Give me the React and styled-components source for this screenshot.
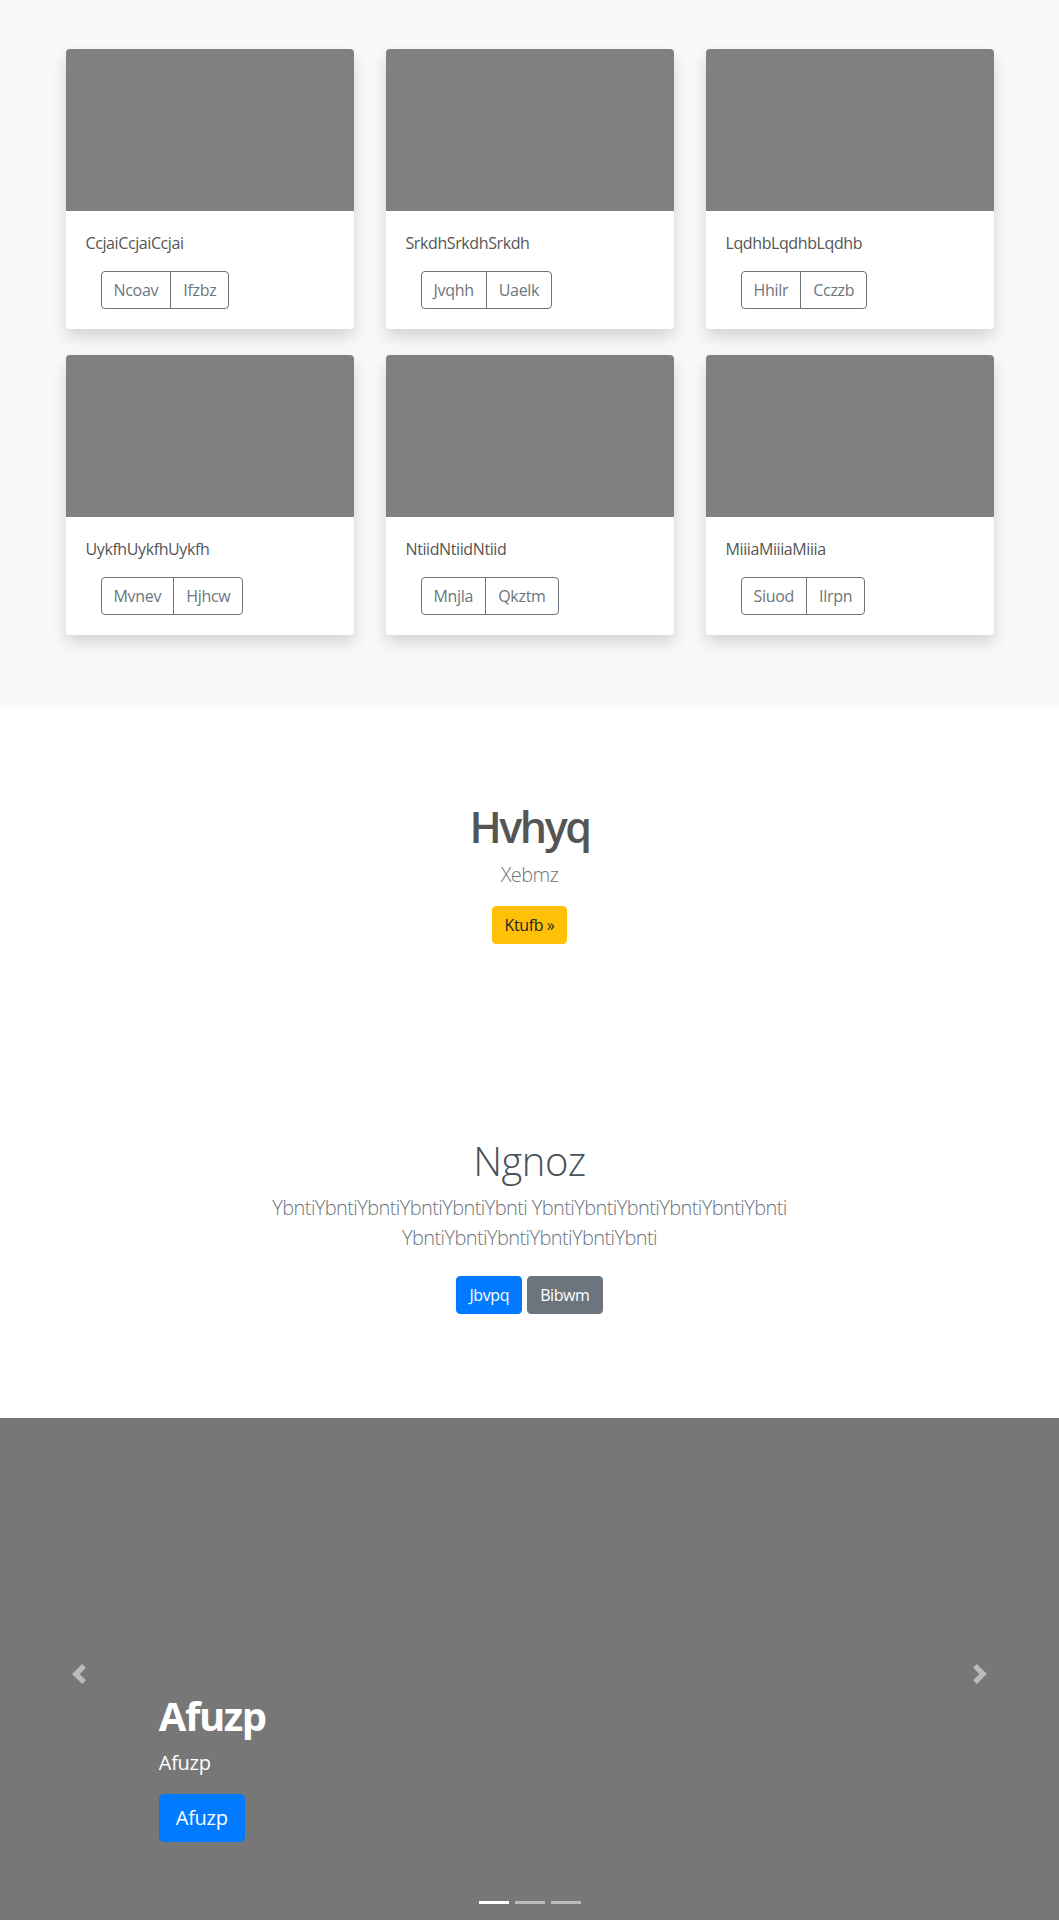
import React from "react";
import styled, { createGlobalStyle } from "styled-components";

const GlobalStyle = createGlobalStyle`
  html, body { margin: 0; padding: 0; background: #fff; }
  body {
    font-family: "Open Sans", "Noto Sans", sans-serif;
    font-size: 16px;
    line-height: 1.5;
    color: #212529;
  }
  * { box-sizing: border-box; }
`;

const CardsSection = styled.section`
  background: #f8f9fa;
  padding: 49px 0 73px;
`;

const CardGrid = styled.div`
  display: grid;
  grid-template-columns: repeat(3, 288px);
  column-gap: 32px;
  row-gap: 26px;
  justify-content: center;
`;

const Card = styled.div`
  background: #fff;
  border-radius: 4px;
  overflow: hidden;
  box-shadow: 0 8px 16px rgba(0, 0, 0, 0.15);
  height: 280px;
  display: flex;
  flex-direction: column;
`;

const CardImage = styled.div`
  height: 162px;
  background: #808080;
`;

const CardBody = styled.div`
  padding: 20px;
`;

const CardTitle = styled.p`
  margin: 0 0 16px;
  font-size: 16px;
  line-height: 24px;
  color: #555;
  letter-spacing: -0.4px;
`;

const ButtonGroup = styled.div`
  display: inline-flex;
  margin-left: 15px;
`;

const OutlineButton = styled.button`
  font-family: inherit;
  font-size: 16px;
  line-height: 24px;
  padding: 6px 12px;
  background: transparent;
  color: #6c757d;
  border: 1px solid #6c757d;
  letter-spacing: -0.3px;
  border-radius: 0;
  &:first-child { border-radius: 4px 0 0 4px; }
  &:last-child { border-radius: 0 4px 4px 0; margin-left: -1px; }
`;

const Hero = styled.section`
  background: #fff;
  padding: ${(p) => p.$pad};
  text-align: center;
`;

const HeroTitle = styled.h1`
  margin: 0 0 ${(p) => p.$mb}px;
  font-size: ${(p) => p.$size}px;
  line-height: 1.2;
  font-weight: ${(p) => p.$weight};
  color: ${(p) => p.$color};
  letter-spacing: ${(p) => p.$ls || "0"};
`;

const Lead = styled.p`
  margin: 0 auto ${(p) => p.$mb}px;
  font-size: 20px;
  line-height: 30px;
  font-weight: 300;
  color: #6c757d;
  max-width: 560px;
  letter-spacing: -0.6px;
`;

const ButtonRow = styled.div`
  display: flex;
  justify-content: center;
  gap: 5px;
`;

const SolidButton = styled.button`
  font-family: inherit;
  font-size: 16px;
  line-height: 24px;
  padding: 6px 12px;
  border: 1px solid ${(p) => p.$bg};
  background: ${(p) => p.$bg};
  color: ${(p) => p.$fg};
  border-radius: 4px;
  letter-spacing: -0.4px;
`;

const Carousel = styled.section`
  position: relative;
  height: 512px;
  background: #777;
  overflow: hidden;
  display: flex;
  flex-direction: column;
  justify-content: flex-end;
  padding: 0 15% 88px;
`;

const Caption = styled.div`
  color: #fff;
  text-align: left;
`;

const CaptionTitle = styled.h1`
  margin: 0 0 8px;
  font-size: 40px;
  line-height: 48px;
  font-weight: 700;
  letter-spacing: -1.5px;
`;

const CaptionText = styled.p`
  margin: 0 0 16px;
  font-size: 20px;
  line-height: 30px;
  letter-spacing: -0.3px;
`;

const LargeButton = styled.button`
  font-family: inherit;
  font-size: 20px;
  line-height: 30px;
  padding: 8px 16px;
  border: 1px solid #007bff;
  background: #007bff;
  color: #fff;
  border-radius: 5px;
  letter-spacing: -0.3px;
`;

const Control = styled.a`
  position: absolute;
  top: 0;
  bottom: 0;
  ${(p) => (p.$side === "left" ? "left: 0;" : "right: 0;")}
  width: 15%;
  display: flex;
  align-items: center;
  justify-content: center;
  opacity: 0.5;
`;

const Indicators = styled.ol`
  position: absolute;
  left: 0;
  right: 0;
  bottom: 26px;
  margin: 0;
  padding: 0;
  list-style: none;
  display: flex;
  justify-content: center;
`;

const Indicator = styled.li`
  width: 30px;
  height: 3px;
  margin: 0 3px;
  background: #fff;
  opacity: ${(p) => (p.$active ? 1 : 0.5)};
`;

const cards = [
  { title: "CcjaiCcjaiCcjai", a: "Ncoav", b: "Ifzbz" },
  { title: "SrkdhSrkdhSrkdh", a: "Jvqhh", b: "Uaelk" },
  { title: "LqdhbLqdhbLqdhb", a: "Hhilr", b: "Cczzb" },
  { title: "UykfhUykfhUykfh", a: "Mvnev", b: "Hjhcw" },
  { title: "NtiidNtiidNtiid", a: "Mnjla", b: "Qkztm" },
  { title: "MiiiaMiiiaMiiia", a: "Siuod", b: "Ilrpn" },
];

const Chevron = ({ dir }) => (
  <svg width="20" height="20" viewBox="0 0 8 8" fill="#fff">
    {dir === "prev" ? (
      <path d="M5.25 0l-4 4 4 4 1.5-1.5L4.25 4l2.5-2.5L5.25 0z" />
    ) : (
      <path d="M2.75 0l-1.5 1.5L3.75 4l-2.5 2.5L2.75 8l4-4-4-4z" />
    )}
  </svg>
);

export default function App() {
  return (
    <>
      <GlobalStyle />
      <CardsSection>
        <CardGrid>
          {cards.map((c) => (
            <Card key={c.title}>
              <CardImage />
              <CardBody>
                <CardTitle>{c.title}</CardTitle>
                <ButtonGroup>
                  <OutlineButton>{c.a}</OutlineButton>
                  <OutlineButton>{c.b}</OutlineButton>
                </ButtonGroup>
              </CardBody>
            </Card>
          ))}
        </CardGrid>
      </CardsSection>

      <Hero $pad="93px 0 96px">
        <HeroTitle $size={43} $weight={600} $color="#555" $mb={7} $ls="-2.5px">
          Hvhyq
        </HeroTitle>
        <Lead $mb={16}>Xebmz</Lead>
        <ButtonRow>
          <SolidButton $bg="#ffc107" $fg="#212529">Ktufb »</SolidButton>
        </ButtonRow>
      </Hero>

      <Hero $pad="97px 0 104px">
        <HeroTitle $size={40} $weight={300} $color="#495057" $mb={8} $ls="-0.5px">
          Ngnoz
        </HeroTitle>
        <Lead $mb={23}>
          YbntiYbntiYbntiYbntiYbntiYbnti YbntiYbntiYbntiYbntiYbntiYbnti
          YbntiYbntiYbntiYbntiYbntiYbnti
        </Lead>
        <ButtonRow>
          <SolidButton $bg="#007bff" $fg="#fff">Jbvpq</SolidButton>
          <SolidButton $bg="#6c757d" $fg="#fff">Bibwm</SolidButton>
        </ButtonRow>
      </Hero>

      <Carousel>
        <Caption>
          <CaptionTitle>Afuzp</CaptionTitle>
          <CaptionText>Afuzp</CaptionText>
          <LargeButton>Afuzp</LargeButton>
        </Caption>
        <Control $side="left" href="#" aria-label="Previous">
          <Chevron dir="prev" />
        </Control>
        <Control $side="right" href="#" aria-label="Next">
          <Chevron dir="next" />
        </Control>
        <Indicators>
          <Indicator $active />
          <Indicator />
          <Indicator />
        </Indicators>
      </Carousel>
    </>
  );
}
